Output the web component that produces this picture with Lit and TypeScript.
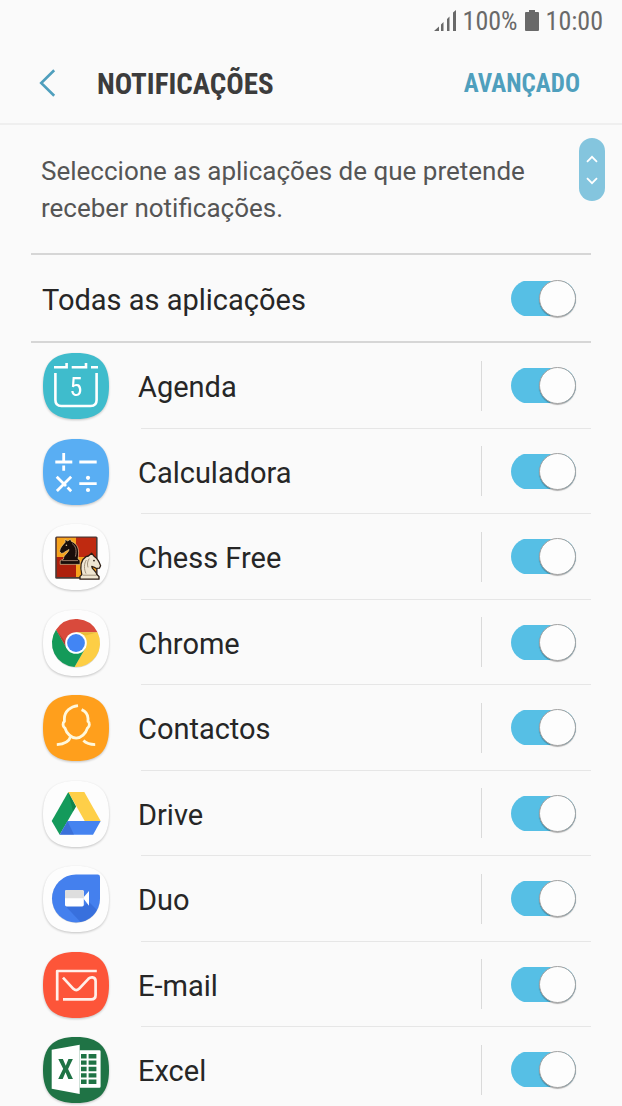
import { LitElement, html, svg, css, type SVGTemplateResult } from "lit";
import { customElement, property, state } from "lit/decorators.js";

interface AppEntry {
  id: string;
  name: string;
  color: string;
  art: SVGTemplateResult;
}

const APPS: AppEntry[] = [
  {
    id: "agenda",
    name: "Agenda",
    color: "#3fbccc",
    art: svg`
      <g fill="none" stroke="#fff" stroke-width="2.6">
        <path d="M11 14.2H23.6V10M28.7 14.2H43V10M48 14.2H55" />
        <path d="M12.4 20V47Q12.4 53 18.4 53H47.6Q53.6 53 53.6 47V20" />
      </g>
      <text class="digit" x="33" y="43">5</text>`,
  },
  {
    id: "calculadora",
    name: "Calculadora",
    color: "#59aef3",
    art: svg`
      <g fill="none" stroke="#fff" stroke-width="2.8">
        <path d="M12.3 23H29.3M20.7 14V24.4M20.7 26.6V31.7M36.3 23H53.7" />
        <path d="M13.7 37.7L23 47M24.6 48.6L28.2 52.2M28.2 37.7L13.9 52M36.3 44.7H53.7" />
      </g>
      <circle cx="45" cy="38.8" r="2.1" fill="#fff" />
      <circle cx="45" cy="51" r="2.1" fill="#fff" />`,
  },
  {
    id: "chess",
    name: "Chess Free",
    color: "#fdfdfd",
    art: svg`
      <rect x="12.2" y="12.4" width="42.4" height="42.4" rx="1.5" fill="#4a3a36" />
      <rect x="13.8" y="13.8" width="39.2" height="39.2" fill="#ad1f0c" />
      <path d="M13.8 13.8H33V33H13.8ZM33 33H53V53H33Z" fill="#f6a31d" />
      <path d="M33 13.8H53V33H33Z" fill="#bf2a10" />
      <path d="M20.5 35C20 31.5 26 28.5 26 25.4C23.5 27.2 22 27.4 20.8 28.8L18.6 29.5L16.6 27.4C16.8 24 20.2 20.4 22.2 18.2L22 15.4L24.8 17L27.4 15.2L28.4 17.4C34 19.4 37 24.6 35 34.8L37 36.4V40.4H17.2V36.8Z"
        fill="#190d0a" stroke="#f2d7a4" stroke-width=".6" />
      <path d="M29.2 19.6C32.8 22 34 26.4 32.4 32.6M19 36.6H35" fill="none" stroke="#a58571" stroke-width=".9" />
      <circle cx="23.4" cy="21.2" r=".8" fill="#e8c99a" />
      <path d="M38.8 50.6C36.8 42.4 37.6 36 43 32.6L45.4 32L48.6 29.2L51 32.2C53.8 34 56.4 38 57.6 41.8L56.4 44.2L53 44.4C51.6 43 50 43 48.8 42.4C48.8 45.4 53.4 46.8 53.8 50.6L56 52.4V55.2H37V52.4Z"
        fill="#efe6d2" stroke="#2b1d14" stroke-width="1.3" stroke-linejoin="round" />
      <path d="M43.4 36C40.8 39.6 41 45.4 43 49.6M46.2 34.6C44.4 37.4 44 40.4 45 43.4M39.6 51.2H53.6" fill="none" stroke="#8f7f68" stroke-width=".8" />
      <circle cx="51" cy="36.6" r=".9" fill="#2b1d14" />`,
  },
  {
    id: "chrome",
    name: "Chrome",
    color: "#fdfdfd",
    art: svg`
      <circle cx="33" cy="33.8" r="24" fill="#000" opacity=".14" />
      <path d="M13 19.7A24 24 0 0 1 54.5 22.3H33L23.7 38.3Z" fill="#d94a3c" />
      <path d="M54.5 22.3A24 24 0 0 1 31.5 57L42.3 38.3L33 22.3Z" fill="#fdce45" />
      <path d="M31.5 57A24 24 0 0 1 13 19.7L23.7 38.3H42.3Z" fill="#149a59" />
      <path d="M33 22.3H54.5L42.6 25.6Z" fill="#c99a1f" opacity=".35" />
      <path d="M13 19.7L23.7 38.3L22.4 32Z" fill="#8c2a20" opacity=".45" />
      <circle cx="33" cy="33" r="10.8" fill="#fff" />
      <circle cx="33" cy="33" r="8.9" fill="#4285f4" />`,
  },
  {
    id: "contactos",
    name: "Contactos",
    color: "#ff9f1c",
    art: svg`
      <g fill="none" stroke="#fff8dc" stroke-width="2.8" stroke-linejoin="round">
        <path d="M35 10.6C27 11.6 21.6 16.6 21.4 23.4V26.4C19.6 27.6 19.4 31.6 22 33.2C23.4 38.6 28.6 42.8 33.2 43.2C37.8 42.8 43 38.6 44.4 33.2C47 31.6 46.8 27.6 45 26.4V23.4C44.8 19.6 42.4 16.2 38.6 14.6" />
        <path d="M13.8 49.6C20.6 49.2 26.2 46.4 27.6 41.6M40.4 45.6C43 48.2 47.4 49.6 52.2 49.6" />
      </g>`,
  },
  {
    id: "drive",
    name: "Drive",
    color: "#fdfdfd",
    art: svg`
      <path d="M25.3 11L8.7 40L16.7 53.7L33 25.4Z" fill="#149a5b" />
      <path d="M25.3 11H41.3L57.7 40H41.7Z" fill="#fecf48" />
      <path d="M16.7 53.7L24.5 40H57.7L50 53.7Z" fill="#4583f0" />
      <path d="M25.3 11L33 25.4L30 30.6Z" fill="#0b6b3d" opacity=".5" />
      <path d="M16.7 53.7L24.5 40L31 53.7Z" fill="#2a56b8" opacity=".4" />`,
  },
  {
    id: "duo",
    name: "Duo",
    color: "#fdfdfd",
    art: svg`
      <path d="M33 9.2H54.6Q57 9.2 57 11.6V33.2A24 24 0 1 1 33 9.2Z" fill="#000" opacity=".14" />
      <path d="M33 8.5H54.6Q57 8.5 57 10.9V32.5A24 24 0 1 1 33 8.5Z" fill="#4480ee" />
      <path d="M22.4 40L37.5 56.1A24 24 0 0 0 54 44L46 36L40.5 40Z" fill="#2f63cf" opacity=".55" />
      <path d="M40 32L46 25V39.8Z" fill="#fff" />
      <rect x="22" y="24" width="18.8" height="16.4" rx="1.6" fill="#fff" />
      <path d="M22 32.2V25.6Q22 24 23.6 24H39.2Q40.8 24 40.8 25.6V32.2Z" fill="#dedede" />`,
  },
  {
    id: "email",
    name: "E-mail",
    color: "#fd5539",
    art: svg`
      <g fill="none" stroke="#ffefe9" stroke-width="2.7" stroke-linejoin="round">
        <path d="M14.2 48.6V19H53.8" />
        <path d="M20 25.6L30.4 36.8Q33.2 39.4 36 36.8L45.4 26.8Q47 25.2 49.4 25.4Q52.6 25.8 52.6 29V43Q52.6 47.4 48.2 47.4H20" />
      </g>`,
  },
  {
    id: "excel",
    name: "Excel",
    color: "#1f7345",
    art: svg`
      <path d="M36.7 13.3H56.4Q57.6 13.3 57.6 14.5V49.5Q57.6 50.7 56.4 50.7H36.7ZM38 17H43.6V21.4H38ZM45.6 17H53.4V21.4H45.6ZM38 23.4H43.6V27.8H38ZM45.6 23.4H53.4V27.8H45.6ZM38 29.8H43.6V34.2H38ZM45.6 29.8H53.4V34.2H45.6ZM38 36.2H43.6V40.6H38ZM45.6 36.2H53.4V40.6H45.6ZM38 42.6H43.6V47H38ZM45.6 42.6H53.4V47H45.6Z"
        fill="#fff" fill-rule="evenodd" />
      <path d="M8.7 12.7L36.7 7.7V57L8.7 51.7Z" fill="#fff" />
      <text class="letter" x="22.6" y="42">X</text>`,
  },
];

@customElement("toggle-switch")
class ToggleSwitch extends LitElement {
  @property() label = "";
  @property({ type: Boolean }) checked = false;

  static styles = css`
    :host {
      display: block;
      flex: none;
    }
    .switch {
      appearance: none;
      display: flex;
      align-items: center;
      justify-content: flex-start;
      width: 65px;
      height: 37px;
      margin: 0;
      border-radius: 19px;
      background: linear-gradient(#b9bcbe, #b9bcbe) center / 100% 35px no-repeat;
      cursor: pointer;
    }
    .switch::before {
      content: "";
      box-sizing: border-box;
      width: 37px;
      height: 37px;
      border: 1px solid #a3a3a3;
      border-radius: 50%;
      background: #fdfdfd;
      box-shadow: 0 1px 1px #0000004d;
    }
    .switch:checked {
      justify-content: flex-end;
      background-image: linear-gradient(#56bfe5, #56bfe5);
    }
  `;

  private toggle(e: Event) {
    this.checked = (e.target as HTMLInputElement).checked;
    this.dispatchEvent(new CustomEvent("toggled", { detail: this.checked }));
  }

  render() {
    return html`<input
      class="switch"
      type="checkbox"
      role="switch"
      aria-label=${this.label}
      .checked=${this.checked}
      @change=${this.toggle}
    />`;
  }
}

@customElement("app-icon")
class AppIcon extends LitElement {
  @property() color = "#fff";
  @property({ attribute: false }) art?: SVGTemplateResult;

  static styles = css`
    :host {
      display: block;
      flex: none;
    }
    .icon {
      display: block;
      width: 66px;
      height: 66px;
      overflow: visible;
      filter: drop-shadow(0 1px 1px #00000038);
    }
    .digit,
    .letter {
      font-family: "Roboto Condensed", "Liberation Sans Narrow", Roboto, sans-serif;
      text-anchor: middle;
    }
    .digit {
      font-size: 26px;
      font-weight: 400;
      fill: #fff;
    }
    .letter {
      font-size: 28px;
      font-weight: 700;
      fill: #1f7345;
    }
  `;

  render() {
    return html`<svg class="icon" viewBox="0 0 66 66" aria-hidden="true">
      <path d="M33 0C56 0 66 10 66 33S56 66 33 66 0 56 0 33 10 0 33 0Z" fill=${this.color} />
      ${this.art}
    </svg>`;
  }
}

@customElement("app-root")
class AppRoot extends LitElement {
  @state() private enabled = new Set(APPS.map((a) => a.id));

  static styles = css`
    :host {
      display: flex;
      flex-direction: column;
      height: 100vh;
      overflow: hidden;
      background: #fafafa;
      color: #262626;
      font-family: Roboto, sans-serif;
    }
    .status {
      display: flex;
      flex: none;
      align-items: center;
      justify-content: flex-end;
      gap: 7px;
      height: 43px;
      padding-right: 19px;
      color: #696969;
      font: 400 26px/43px "Roboto Condensed", "Liberation Sans Narrow", Roboto, sans-serif;
    }
    .signal,
    .battery {
      height: 22px;
      margin-bottom: 3px;
    }
    .signal {
      width: 22px;
    }
    .battery {
      width: 14px;
    }
    .bar {
      display: flex;
      flex: none;
      align-items: center;
      box-sizing: border-box;
      height: 82px;
      padding: 2px 42px 0 38px;
      border-bottom: 2px solid #efefef;
      font-family: "Roboto Condensed", "Liberation Sans Narrow", Roboto, sans-serif;
    }
    .back,
    .advanced,
    .scroller {
      padding: 0;
      border: 0;
      background: none;
      cursor: pointer;
    }
    .back {
      display: flex;
      width: 59px;
      padding-bottom: 2px;
    }
    .title {
      flex: 1;
      margin: 0;
      color: #3c3c3c;
      font-size: 29px;
      font-weight: 700;
      line-height: 36px;
    }
    .advanced {
      color: #4f9fbd;
      font-family: inherit;
      font-size: 25px;
      font-weight: 700;
      line-height: 36px;
    }
    .content {
      position: relative;
      flex: 1;
      min-height: 0;
      overflow: hidden auto;
      padding: 0 31px;
      scrollbar-width: none;
    }
    .intro {
      margin: 0;
      padding: 28px 40px 26px 10px;
      color: #555;
      font-size: 26px;
      line-height: 37px;
    }
    .all {
      display: flex;
      align-items: center;
      justify-content: space-between;
      height: 86px;
      padding: 0 15px 0 11px;
      border: 2px solid #d6d6d6;
      border-width: 2px 0;
    }
    .list {
      margin: 0;
      padding: 0;
      list-style: none;
    }
    .row {
      display: flex;
      box-sizing: border-box;
      height: 85px;
      padding-left: 12px;
    }
    .row:nth-child(odd) {
      height: 86px;
    }
    .row app-icon {
      align-self: center;
      width: 98px;
    }
    .body {
      display: flex;
      flex: 1;
      align-items: center;
      padding-right: 15px;
      border-bottom: 1px solid #e6e6e6;
    }
    .label {
      padding-top: 3px;
      font-size: 29px;
    }
    .name {
      flex: 1;
      margin-left: -3px;
    }
    .rule {
      width: 1px;
      height: 50px;
      margin-right: 29px;
      background: #dadada;
    }
    .scroller {
      position: absolute;
      top: 13px;
      right: 17px;
      display: flex;
      flex-direction: column;
      align-items: center;
      justify-content: center;
      gap: 14px;
      width: 26px;
      height: 63px;
      border-radius: 13px;
      background: #84c5de;
    }
  `;

  private setOne(id: string, on: boolean) {
    const next = new Set(this.enabled);
    if (on) next.add(id);
    else next.delete(id);
    this.enabled = next;
  }

  private setAll(on: boolean) {
    this.enabled = new Set(on ? APPS.map((a) => a.id) : []);
  }

  render() {
    return html`
      <div class="status">
        <svg class="signal" viewBox="0 0 22 22" fill="currentColor" aria-hidden="true">
          <path d="M0 22L5 17.5V22ZM7 22V15.5L9.5 13V22ZM13 22V10L15.5 7.5V22ZM19 22V3.5L22 1V22Z" />
        </svg>
        <span>100%</span>
        <svg class="battery" viewBox="0 0 14 22" fill="currentColor" aria-hidden="true">
          <path d="M4 1H10V3H13Q14 3 14 4V21Q14 22 13 22H1Q0 22 0 21V4Q0 3 1 3H4Z" />
        </svg>
        <span>10:00</span>
      </div>
      <header class="bar">
        <button class="back" aria-label="Voltar">
          <svg width="18" height="28" viewBox="0 0 18 28" fill="none" stroke="#4f9fbd" stroke-width="2.6">
            <path d="M16.2 1.2L3.2 14L16.2 26.8" />
          </svg>
        </button>
        <h1 class="title">NOTIFICAÇÕES</h1>
        <button class="advanced">AVANÇADO</button>
      </header>
      <main class="content">
        <p class="intro">Seleccione as aplicações de que pretende receber notificações.</p>
        <div class="all">
          <span class="label">Todas as aplicações</span>
          <toggle-switch
            label="Todas as aplicações"
            .checked=${this.enabled.size === APPS.length}
            @toggled=${(e: CustomEvent<boolean>) => this.setAll(e.detail)}
          ></toggle-switch>
        </div>
        <ul class="list">
          ${APPS.map(
            (app) => html`<li class="row">
              <app-icon .color=${app.color} .art=${app.art}></app-icon>
              <div class="body">
                <span class="label name">${app.name}</span>
                <span class="rule"></span>
                <toggle-switch
                  label=${app.name}
                  .checked=${this.enabled.has(app.id)}
                  @toggled=${(e: CustomEvent<boolean>) => this.setOne(app.id, e.detail)}
                ></toggle-switch>
              </div>
            </li>`,
          )}
        </ul>
        <button class="scroller" aria-label="Deslocar">
          <svg width="12" height="8" viewBox="0 0 12 8" fill="none" stroke="#fff" stroke-width="1.8">
            <path d="M1 6.8L6 1.8L11 6.8" />
          </svg>
          <svg width="12" height="8" viewBox="0 0 12 8" fill="none" stroke="#fff" stroke-width="1.8">
            <path d="M1 1.2L6 6.2L11 1.2" />
          </svg>
        </button>
      </main>
    `;
  }
}
